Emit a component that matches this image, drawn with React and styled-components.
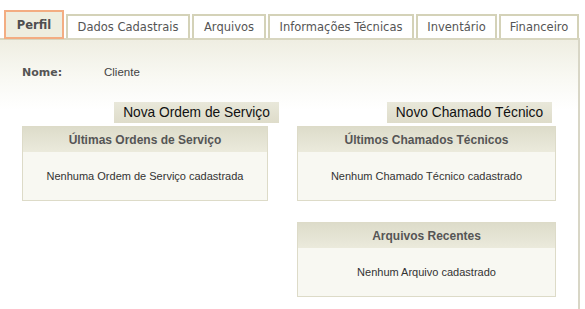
import React from 'react';
import styled, { createGlobalStyle } from 'styled-components';

const GlobalStyle = createGlobalStyle`
  html, body {
    margin: 0;
    padding: 0;
    background: #fff;
  }
  body {
    font-family: "DejaVu Sans", Verdana, sans-serif;
    width: 585px;
    height: 309px;
    overflow: hidden;
  }
`;

const Page = styled.div`
  width: 585px;
  height: 309px;
  display: flex;
  flex-direction: column;
`;

const TabBar = styled.div`
  display: flex;
  align-items: flex-end;
  gap: 2px;
  padding: 10px 0 0 4px;
  height: 38px;
  box-sizing: border-box;
`;

const Tab = styled.div`
  box-sizing: border-box;
  width: ${(p) => p.$width}px;
  height: ${(p) => (p.$active ? '29px' : '24px')};
  margin-bottom: ${(p) => (p.$active ? '-1px' : '0')};
  position: relative;
  z-index: ${(p) => (p.$active ? 2 : 1)};
  display: flex;
  align-items: center;
  justify-content: center;
  font-size: 11.5px;
  font-weight: ${(p) => (p.$active ? 'bold' : 'normal')};
  color: ${(p) => (p.$active ? '#4f4f4f' : '#555')};
  background: ${(p) => (p.$active ? '#eeeee0' : '#fff')};
  border: 2px solid ${(p) => (p.$active ? '#f3ad82' : '#d4d2b8')};
  border-bottom-width: ${(p) => (p.$active ? '2px' : '0')};
  white-space: nowrap;
`;

const Content = styled.div`
  flex: 1;
  width: 580px;
  box-sizing: border-box;
  border-top: 2px solid #d8d6c0;
  border-right: 2px solid #d8d6c6;
  background: linear-gradient(#efeee2 0px, #f8f8f2 35px, #fff 70px);
  padding: 25px 0 0 22px;
`;

const InfoRow = styled.div`
  display: flex;
  font-size: 11px;
  color: #555;
  height: 14px;
  align-items: center;
`;

const InfoLabel = styled.span`
  width: 82px;
  font-weight: bold;
`;

const InfoValue = styled.span`
  font-family: "Liberation Sans", Arial, sans-serif;
  font-size: 11.5px;
  color: #444;
`;

const Columns = styled.div`
  display: grid;
  grid-template-columns: 246px 259px;
  column-gap: 29px;
  margin-top: 23px;
  align-items: start;
`;

const Column = styled.div`
  display: flex;
  flex-direction: column;
  gap: 21px;
`;

const Group = styled.div`
  display: flex;
  flex-direction: column;
  gap: 3px;
`;

const ActionButton = styled.button`
  margin-left: ${(p) => p.$offset}px;
  width: 165px;
  height: 21px;
  padding: 0;
  border: none;
  background: linear-gradient(#e9e8da, #dedcca);
  font-family: "Liberation Sans", Arial, sans-serif;
  font-size: 13.75px;
  color: #111;
  text-align: center;
  cursor: pointer;
`;

const Panel = styled.div`
  border: 1px solid #dddbc8;
  background: #f8f8f2;
  box-sizing: border-box;
  height: 75px;
`;

const PanelHeader = styled.div`
  height: 25px;
  display: flex;
  align-items: center;
  justify-content: center;
  background: linear-gradient(#dddcca, #ebeadc);
  font-family: "Liberation Sans", Arial, sans-serif;
  font-size: 12px;
  font-weight: bold;
  color: #555;
`;

const PanelBody = styled.div`
  height: 47px;
  display: flex;
  align-items: center;
  justify-content: center;
  font-family: "Liberation Sans", Arial, sans-serif;
  font-size: 11px;
  color: #333;
`;

const tabs = [
  { label: 'Perfil', active: true, width: 60 },
  { label: 'Dados Cadastrais', width: 124 },
  { label: 'Arquivos', width: 74 },
  { label: 'Informações Técnicas', width: 146 },
  { label: 'Inventário', width: 81 },
  { label: 'Financeiro', width: 80 },
];

function Box({ title, empty }) {
  return (
    <Panel>
      <PanelHeader>{title}</PanelHeader>
      <PanelBody>{empty}</PanelBody>
    </Panel>
  );
}

export default function App() {
  return (
    <Page>
      <GlobalStyle />
      <TabBar>
        {tabs.map((t) => (
          <Tab key={t.label} $active={t.active} $width={t.width}>
            {t.label}
          </Tab>
        ))}
      </TabBar>
      <Content>
        <InfoRow>
          <InfoLabel>Nome:</InfoLabel>
          <InfoValue>Cliente</InfoValue>
        </InfoRow>
        <Columns>
          <Column>
            <Group>
              <ActionButton $offset={92}>Nova Ordem de Serviço</ActionButton>
              <Box title="Últimas Ordens de Serviço" empty="Nenhuma Ordem de Serviço cadastrada" />
            </Group>
          </Column>
          <Column>
            <Group>
              <ActionButton $offset={90}>Novo Chamado Técnico</ActionButton>
              <Box title="Últimos Chamados Técnicos" empty="Nenhum Chamado Técnico cadastrado" />
            </Group>
            <Box title="Arquivos Recentes" empty="Nenhum Arquivo cadastrado" />
          </Column>
        </Columns>
      </Content>
    </Page>
  );
}
